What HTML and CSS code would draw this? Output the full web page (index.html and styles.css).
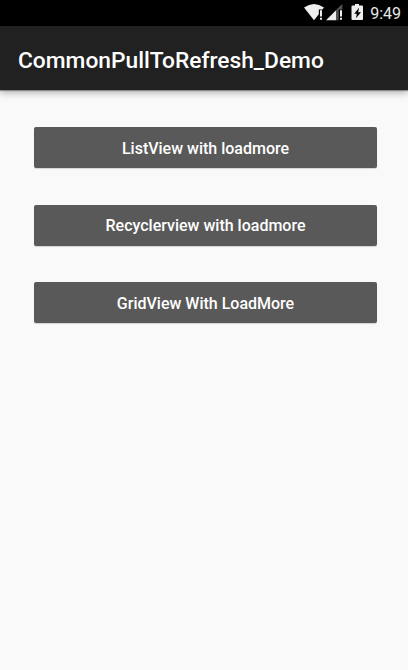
FILE: index.html
```html
<!DOCTYPE html>
<html lang="en">
<head>
<meta charset="utf-8">
<title>CommonPullToRefresh_Demo</title>
<link rel="stylesheet" href="styles.css">
</head>
<body>
<div class="status-bar">
  <svg class="status-icons" width="60" height="18" viewBox="304 3 60 18" aria-hidden="true">
    <path fill="#eee" d="M304 7.6Q314 .6 324 7.6L322.400 9.500H318.800V14.300L314 20.300Z"/>
    <path fill="#eee" d="M320 10.300h2v6.200h-2zM320 17.800h2v2h-2z"/>
    <path fill="#555" d="M336 10 342.300 4V9.500H338.700V20.300H336Z"/>
    <path fill="#eee" d="M326 20.300 336 10.300V20.300ZM340 10.300h2v6.200h-2zM340 17.800h2v2h-2z"/>
    <path fill="#eee" fill-rule="evenodd" d="M355 4h4v1.600h3q1 0 1 1V19q0 1-1 1h-9.500q-1 0-1-1V6.600q0-1 1-1H355ZM359 7.800 354.200 13.700H356.800L356 18.200 361 12.200H358.200Z"/>
  </svg>
  <span class="clock">9:49</span>
</div>
<header class="app-bar"><h1 class="title">CommonPullToRefresh_Demo</h1></header>
<main class="content">
  <button class="action">ListView with loadmore</button>
  <button class="action">Recyclerview with loadmore</button>
  <button class="action">GridView With LoadMore</button>
</main>
</body>
</html>
```
FILE: styles.css
```css
body {
  margin: 0;
  min-height: 670px;
  background: #f9f9f9;
  font-family: Roboto, "Liberation Sans", sans-serif;
}
.status-bar {
  height: 26px;
  box-sizing: border-box;
  padding-right: 7px;
  display: flex;
  align-items: center;
  justify-content: flex-end;
  gap: 6px;
  background: #000;
}
.status-icons { display: block; margin-top: -2px; }
.clock {
  padding-top: 2px;
  color: #e8e8e8;
  font-size: 16px;
  line-height: 24px;
}
.app-bar {
  height: 64px;
  padding-left: 18px;
  display: flex;
  align-items: center;
  background: #212121;
  box-shadow: 0 1px 1px rgba(0, 0, 0, .3), 0 3px 7px rgba(0, 0, 0, .28);
}
.title {
  margin: 0;
  padding-top: 6px;
  color: #fff;
  font-size: 22.75px;
  font-weight: 500;
  line-height: 28px;
}
.content {
  padding: 37px 31px 0 34px;
  display: flex;
  flex-direction: column;
  gap: 36.5px;
}
.action {
  height: 41px;
  padding: 2px 0 0;
  border: 0;
  border-radius: 2px;
  background: #595959;
  box-shadow: 0 1px 1px rgba(0, 0, 0, .15);
  color: #fff;
  font: 500 16px/20px Roboto, "Liberation Sans", sans-serif;
}
```
